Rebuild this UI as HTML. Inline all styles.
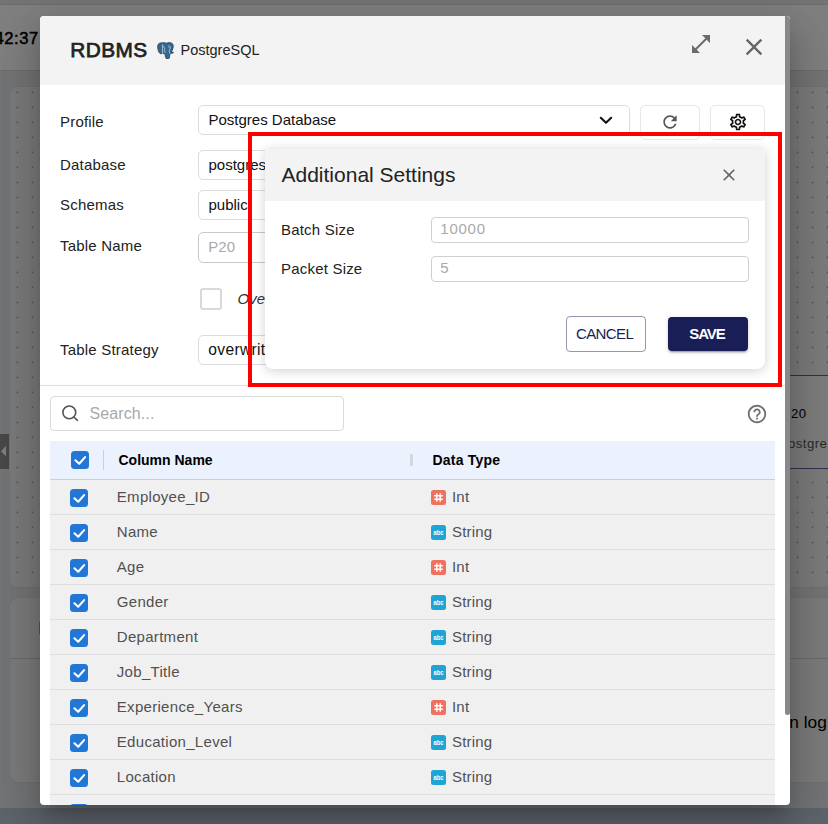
<!DOCTYPE html>
<html lang="en">
<head>
<meta charset="utf-8">
<title>RDBMS - PostgreSQL</title>
<style>
*{box-sizing:border-box;margin:0;padding:0}
html,body{width:828px;height:824px;overflow:hidden}
body{position:relative;background:#e4e8ec;font-family:"Liberation Sans",Arial,sans-serif;color:#222;font-size:15px}
.abs{position:absolute}
.t{position:absolute;white-space:nowrap;line-height:20px}
/* ---------- underlying app (dimmed by backdrop) ---------- */
#topbar{left:0;top:4px;width:828px;height:67px;background:#fff;border-top:1px solid #dadada;border-bottom:1px solid #d8d8d8}
#clock{right:789.2px;top:28.5px;font-size:16.6px;color:#000;letter-spacing:.55px;-webkit-text-stroke:.5px #000}
#card1{left:9px;top:85.5px;width:900px;height:502px;background:#f6f6f6;border:1px solid #e2e2e2;border-radius:9px;overflow:hidden}
#card2{left:9px;top:597px;width:900px;height:186px;background:#f6f6f6;border:1px solid #e2e2e2;border-radius:9px}
#card2 i{display:block;position:absolute;left:0;right:0;top:60px;height:1px;background:#d4d4d4}
#node{left:700px;top:375px;width:200px;height:94px;background:#fbfbfb;border-top:1px solid #60639a;border-bottom:1px solid #60639a}
#botbar{left:0;top:808px;width:828px;height:16px;background:#bcc8d8}
#backdrop{left:0;top:0;width:828px;height:824px;background:rgba(0,0,0,.5)}
/* ---------- dialog ---------- */
#modal{left:40px;top:16px;width:750px;height:788.5px;background:#fff;border-radius:4px;overflow:hidden;
 box-shadow:0 11px 15px -7px rgba(0,0,0,.2),0 24px 38px 3px rgba(0,0,0,.14),0 9px 46px 8px rgba(0,0,0,.12)}
#mhead{left:0;top:0;width:750px;height:69px;background:#f3f3f3}
#thumb{left:745px;top:0;width:5px;height:698.5px;background:#888;border-radius:0 3px 3px 3px}
.box{position:absolute;border:1px solid #dcdcdc;border-radius:5px;background:#fff}
.lbl{font-size:15px;color:#222;letter-spacing:.2px}
.val{font-size:15px;color:#111}
.ph{color:#a9a9a9}
/* grid */
#ghead{left:10px;top:425px;width:725px;height:39px;background:#ebf1fd;border-bottom:1px solid #c9cfdb}
.row{position:absolute;left:10px;width:725px;height:35px;background:#f0f0f0;border-bottom:1px solid #dedede}
.cb{position:absolute;width:18px;height:18px;border-radius:3.5px;background:#2277d6}
.cb svg{position:absolute;left:0;top:0}
.rt{position:absolute;left:66.800px;top:6.800px;line-height:20px;font-size:15px;color:#505050;white-space:nowrap;letter-spacing:.3px}
.dt{position:absolute;left:402px;top:6.800px;line-height:20px;font-size:15px;color:#505050;white-space:nowrap;letter-spacing:.2px}
.ic{position:absolute;left:381px;top:10px;width:15px;height:15px;border-radius:2.5px}
.ic.n{background:#f07160}
.ic.s{background:#1fa4d6}
.ic svg{position:absolute;left:0;top:0}
/* popup */
#pop{left:265px;top:148.5px;width:500px;height:220px;background:#fff;border-radius:1px 1px 8px 8px;overflow:hidden;
 box-shadow:0 1.500px 12px 0 rgba(0,0,0,.18)}
#phead{left:0;top:0;width:500px;height:52px;background:#f3f3f3}
</style>
</head>
<body>
<!-- underlying application -->
<div id="topbar" class="abs"></div>
<div id="clock" class="t">42:37</div>
<div id="card1" class="abs"><svg class="abs" style="left:0px;top:-1px" width="830" height="501"><defs><pattern id="dots" x="0" y="-1.200" width="15" height="15" patternUnits="userSpaceOnUse"><circle cx="7.5" cy="7.5" r=".85" fill="#989898"/></pattern></defs><rect width="830" height="501" fill="url(#dots)"/></svg></div>
<div id="card2" class="abs"><i></i></div>
<div id="node" class="abs"></div>
<div class="t" style="left:781.600px;top:403.500px;font-size:13.200px;color:#000;letter-spacing:.5px">P20</div>
<div class="t" style="left:778.700px;top:434.200px;font-size:13.200px;color:#555;letter-spacing:.45px">PostgreSQL</div>
<div class="t" style="left:789.300px;top:711.800px;font-size:17.300px;color:#000">n log</div>
<div class="abs" style="left:38.800px;top:622px;width:1.200px;height:12px;background:#f0a040"></div>
<div class="abs" style="left:0;top:434.2px;width:8.900px;height:34.500px;background:#909090"></div>
<svg class="abs" style="left:0;top:444px" width="9" height="14" viewBox="0 0 9 14"><path d="M.9 7.200 6 2.100V12.200z" fill="#fff"/></svg>
<div id="botbar" class="abs"></div>
<div id="backdrop" class="abs"></div>

<!-- dialog -->
<div id="modal" class="abs">
  <div id="mhead" class="abs"></div>
  <div class="t" style="left:30.300px;top:21.500px;font-size:20.800px;color:#222;line-height:24px;-webkit-text-stroke:.75px #222;letter-spacing:.4px">RDBMS</div>
  <svg class="abs" style="left:117px;top:25.500px" width="17.500" height="17.500" viewBox="0 0 17.500 17.500">
    <path d="M3.200 1C1.500 1.400.5 2.800.6 4.800c.1 2.400.9 5 1.900 6.200.8 1 2.200 1 3-.1.600.8 1.600 1.100 2.600.8l.2 2.600c.1 1.800 1 2.800 2.200 2.800 1.400 0 2.100-1 2.200-2.600l.2-3c1 .2 2.400 0 3.400-.7.400-.3.200-.7-.300-.6-.7.100-1.300 0-1.700-.300 1.400-2 2.400-5 1.800-7C15.600 1.400 14 .6 12.300.6c-1 0-1.900.2-2.700.6C8.900.900 8.100.7 7.100.7c-1.400 0-2.600.1-3.900.3z" fill="#336791" stroke="#27394b" stroke-width=".75" stroke-linejoin="round"/>
    <path d="M5.700 2.800c-.4 2.400-.2 5.800-.2 8.100M5.800 4.200c1.300.4 2.100 1.600 1.900 3.400-.1 1-.3 2 .4 3M11.700 3.800c1-.2 1.800.6 1.600 1.800-.2 1.400-1.200 2.800-1 4.200.1.800.4 1.400.6 1.700" fill="none" stroke="#e6eef6" stroke-width=".65" stroke-linecap="round"/>
    <circle cx="11.900" cy="5.400" r=".45" fill="#e6eef6"/>
  </svg>
  <div class="t" style="left:140.5px;top:24.400px;font-size:14.500px;color:#222">PostgreSQL</div>
  <svg class="abs" style="left:649px;top:16px" width="24" height="24" viewBox="0 0 24 24"><path fill="#6b6b6b" d="M21 11V3h-8l3.290 3.290-10 10L3 13v8h8l-3.290-3.290 10-10z"/></svg>
  <svg class="abs" style="left:700px;top:16.800px" width="28" height="28" viewBox="0 0 24 24"><path fill="#666" d="M19 6.410 17.590 5 12 10.590 6.410 5 5 6.410 10.590 12 5 17.590 6.410 19 12 13.410 17.590 19 19 17.590 13.410 12z"/></svg>

  <!-- form -->
  <div class="t lbl" style="left:20px;top:95.900px">Profile</div>
  <div class="t lbl" style="left:20px;top:139px">Database</div>
  <div class="t lbl" style="left:20px;top:178.600px">Schemas</div>
  <div class="t lbl" style="left:20px;top:220px">Table Name</div>
  <div class="t lbl" style="left:20px;top:324px">Table Strategy</div>

  <div class="box" style="left:158px;top:89px;width:432px;height:30px"></div>
  <div class="t val" style="left:168.5px;top:93.6px">Postgres Database</div>
  <svg class="abs" style="left:559px;top:100px" width="14" height="9" viewBox="0 0 14 9"><path d="M1.8 1.800 7 6.800 12.200 1.800" fill="none" stroke="#111" stroke-width="2.100" stroke-linecap="round" stroke-linejoin="round"/></svg>
  <div class="box" style="left:600.4px;top:89px;width:59.4px;height:34.5px;border-color:#e6e6e6"></div>
  <svg class="abs" style="left:620px;top:96px" width="20" height="20" viewBox="0 0 24 24"><path fill="#555" d="M17.650 6.350C16.200 4.900 14.210 4 12 4c-4.420 0-7.990 3.580-7.990 8s3.570 8 7.990 8c3.730 0 6.840-2.550 7.730-6h-2.080c-.82 2.330-3.040 4-5.650 4-3.310 0-6-2.690-6-6s2.690-6 6-6c1.660 0 3.140.69 4.220 1.780L13 11h7V4l-2.350 2.350z"/></svg>
  <div class="box" style="left:670.2px;top:89px;width:54.8px;height:34.5px;border-color:#e6e6e6"></div>
  <svg class="abs" style="left:687.7px;top:96px" width="20" height="20" viewBox="0 0 24 24"><path fill="#111" d="M19.430 12.980c.04-.32.070-.64.070-.98 0-.34-.03-.66-.07-.98l2.110-1.650c.19-.15.240-.42.120-.64l-2-3.460c-.09-.16-.26-.25-.44-.25-.06 0-.12.010-.17.030l-2.490 1c-.52-.4-1.080-.73-1.690-.98l-.38-2.650C14.460 2.180 14.250 2 14 2h-4c-.25 0-.46.180-.49.420l-.38 2.650c-.61.250-1.170.59-1.690.98l-2.490-1c-.06-.02-.12-.03-.18-.03-.17 0-.34.090-.43.250l-2 3.460c-.13.220-.07.490.12.640l2.110 1.650c-.04.320-.07.650-.07.980 0 .33.030.66.070.98l-2.110 1.650c-.19.150-.24.420-.12.640l2 3.460c.09.160.26.250.44.250.06 0 .12-.01.17-.03l2.490-1c.52.400 1.080.73 1.690.98l.38 2.650c.03.240.24.420.49.420h4c.25 0 .46-.18.490-.42l.38-2.650c.61-.25 1.170-.59 1.690-.98l2.490 1c.06.020.12.030.18.030.17 0 .34-.09.430-.25l2-3.460c.12-.22.070-.49-.12-.64l-2.110-1.650zm-1.980-1.710c.04.310.05.520.05.730 0 .21-.02.430-.05.730l-.14 1.130.89.700 1.080.84-.7 1.210-1.270-.51-1.040-.42-.9.680c-.43.320-.84.560-1.250.73l-1.060.43-.16 1.130-.2 1.350h-1.400l-.19-1.350-.16-1.130-1.060-.43c-.43-.18-.83-.41-1.230-.71l-.91-.7-1.060.43-1.270.51-.7-1.210 1.080-.84.890-.7-.14-1.130c-.03-.31-.05-.54-.05-.74s.02-.43.050-.73l.14-1.130-.89-.7-1.080-.84.700-1.210 1.270.51 1.040.42.900-.68c.43-.32.840-.56 1.250-.73l1.060-.43.160-1.130.200-1.350h1.390l.19 1.350.16 1.130 1.060.43c.43.180.83.410 1.230.710l.91.700 1.060-.43 1.270-.51.700 1.210-1.070.85-.89.700.14 1.130zM12 8c-2.210 0-4 1.790-4 4s1.790 4 4 4 4-1.790 4-4-1.790-4-4-4zm0 6c-1.100 0-2-.9-2-2s.9-2 2-2 2 .9 2 2-.9 2-2 2z"/></svg>

  <div class="box" style="left:158px;top:134px;width:432px;height:30px"></div>
  <div class="t val" style="left:168.5px;top:138.900px">postgres</div>
  <div class="box" style="left:158px;top:174px;width:432px;height:30px"></div>
  <div class="t val" style="left:168.5px;top:178.900px">public</div>
  <div class="box" style="left:158px;top:216px;width:432px;height:31px;border-color:#c9c9c9"></div>
  <div class="t val ph" style="left:168.300px;top:220.800px">P20</div>
  <div class="abs" style="left:160px;top:271.800px;width:22px;height:22px;border:2px solid #d9d9d9;border-radius:3px;background:#fff"></div>
  <div class="t" style="left:197.500px;top:272.500px;font-style:italic;color:#333">Overwrite</div>
  <div class="box" style="left:158px;top:319px;width:432px;height:30px"></div>
  <div class="t val" style="left:168.300px;top:323.500px;font-size:15.600px;letter-spacing:.32px">overwrite</div>

  <div class="abs" style="left:0;top:369px;width:750px;height:1px;background:#dedede"></div>

  <!-- search -->
  <div class="box" style="left:10.200px;top:380.200px;width:294px;height:35px;border-radius:4px;border-color:#dadada"></div>
  <svg class="abs" style="left:20px;top:388px" width="20" height="20" viewBox="0 0 20 20"><circle cx="9.300" cy="8.400" r="6.400" fill="none" stroke="#555" stroke-width="1.600"/><path d="M13.900 13 17.400 16.300" stroke="#555" stroke-width="1.600" stroke-linecap="round"/></svg>
  <div class="t ph" style="left:49.500px;top:387.800px;font-size:16px;letter-spacing:.1px">Search...</div>
  <svg class="abs" style="left:706.200px;top:387.300px" width="22" height="22" viewBox="0 0 24 24"><path fill="#707070" d="M11 18h2v-2h-2v2zm1-16C6.480 2 2 6.480 2 12s4.480 10 10 10 10-4.480 10-10S17.520 2 12 2zm0 18c-4.410 0-8-3.590-8-8s3.590-8 8-8 8 3.590 8 8-3.590 8-8 8zm0-14c-2.210 0-4 1.790-4 4h2c0-1.100.9-2 2-2s2 .9 2 2c0 2-3 1.750-3 5h2c0-2.250 3-2.500 3-5 0-2.210-1.790-4-4-4z"/></svg>

  <!-- grid -->
  <div id="ghead" class="abs">
    <div class="cb" style="left:21px;top:10px"><svg width="18" height="18" viewBox="0 0 18 18"><path d="M4.400 9.300 8.200 12.700 14.100 6.100" fill="none" stroke="#fff" stroke-width="2.100" stroke-linecap="round" stroke-linejoin="round"/></svg></div>
    <div class="abs" style="left:53px;top:9px;width:1px;height:20px;background:#cfcfcf"></div>
    <div class="t" style="left:68.500px;top:9.300px;font-size:14px;font-weight:bold;color:#000">Column Name</div>
    <div class="abs" style="left:360px;top:13.200px;width:2.500px;height:12px;background:#d3d7de"></div>
    <div class="t" style="left:382.500px;top:9.300px;font-size:14px;font-weight:bold;color:#000;letter-spacing:.2px">Data Type</div>
  </div>
  <div class="row" style="top:464.0px"><div class="cb" style="left:20px;top:9px"><svg width="18" height="18" viewBox="0 0 18 18"><path d="M4.400 9.300 8.200 12.700 14.100 6.100" fill="none" stroke="#fff" stroke-width="2.100" stroke-linecap="round" stroke-linejoin="round"/></svg></div><span class="rt">Employee_ID</span><span class="ic n"><svg width="15" height="15" viewBox="0 0 15 15"><path d="M5.800 3.200v8.600M9.200 3.200v8.600M3.200 5.800h8.600M3.200 9.200h8.600" stroke="#fff" stroke-width="1.400" fill="none"/></svg></span><span class="dt">Int</span></div>
  <div class="row" style="top:499.0px"><div class="cb" style="left:20px;top:9px"><svg width="18" height="18" viewBox="0 0 18 18"><path d="M4.400 9.300 8.200 12.700 14.100 6.100" fill="none" stroke="#fff" stroke-width="2.100" stroke-linecap="round" stroke-linejoin="round"/></svg></div><span class="rt">Name</span><span class="ic s"><svg width="15" height="15" viewBox="0 0 15 15"><text x="7.500" y="10.300" font-family="Liberation Sans,Arial,sans-serif" font-size="7" font-weight="bold" fill="#fff" text-anchor="middle" textLength="10" lengthAdjust="spacingAndGlyphs">abc</text></svg></span><span class="dt">String</span></div>
  <div class="row" style="top:534.0px"><div class="cb" style="left:20px;top:9px"><svg width="18" height="18" viewBox="0 0 18 18"><path d="M4.400 9.300 8.200 12.700 14.100 6.100" fill="none" stroke="#fff" stroke-width="2.100" stroke-linecap="round" stroke-linejoin="round"/></svg></div><span class="rt">Age</span><span class="ic n"><svg width="15" height="15" viewBox="0 0 15 15"><path d="M5.800 3.200v8.600M9.200 3.200v8.600M3.200 5.800h8.600M3.200 9.200h8.600" stroke="#fff" stroke-width="1.400" fill="none"/></svg></span><span class="dt">Int</span></div>
  <div class="row" style="top:569.0px"><div class="cb" style="left:20px;top:9px"><svg width="18" height="18" viewBox="0 0 18 18"><path d="M4.400 9.300 8.200 12.700 14.100 6.100" fill="none" stroke="#fff" stroke-width="2.100" stroke-linecap="round" stroke-linejoin="round"/></svg></div><span class="rt">Gender</span><span class="ic s"><svg width="15" height="15" viewBox="0 0 15 15"><text x="7.500" y="10.300" font-family="Liberation Sans,Arial,sans-serif" font-size="7" font-weight="bold" fill="#fff" text-anchor="middle" textLength="10" lengthAdjust="spacingAndGlyphs">abc</text></svg></span><span class="dt">String</span></div>
  <div class="row" style="top:604.0px"><div class="cb" style="left:20px;top:9px"><svg width="18" height="18" viewBox="0 0 18 18"><path d="M4.400 9.300 8.200 12.700 14.100 6.100" fill="none" stroke="#fff" stroke-width="2.100" stroke-linecap="round" stroke-linejoin="round"/></svg></div><span class="rt">Department</span><span class="ic s"><svg width="15" height="15" viewBox="0 0 15 15"><text x="7.500" y="10.300" font-family="Liberation Sans,Arial,sans-serif" font-size="7" font-weight="bold" fill="#fff" text-anchor="middle" textLength="10" lengthAdjust="spacingAndGlyphs">abc</text></svg></span><span class="dt">String</span></div>
  <div class="row" style="top:639.0px"><div class="cb" style="left:20px;top:9px"><svg width="18" height="18" viewBox="0 0 18 18"><path d="M4.400 9.300 8.200 12.700 14.100 6.100" fill="none" stroke="#fff" stroke-width="2.100" stroke-linecap="round" stroke-linejoin="round"/></svg></div><span class="rt">Job_Title</span><span class="ic s"><svg width="15" height="15" viewBox="0 0 15 15"><text x="7.500" y="10.300" font-family="Liberation Sans,Arial,sans-serif" font-size="7" font-weight="bold" fill="#fff" text-anchor="middle" textLength="10" lengthAdjust="spacingAndGlyphs">abc</text></svg></span><span class="dt">String</span></div>
  <div class="row" style="top:674.0px"><div class="cb" style="left:20px;top:9px"><svg width="18" height="18" viewBox="0 0 18 18"><path d="M4.400 9.300 8.200 12.700 14.100 6.100" fill="none" stroke="#fff" stroke-width="2.100" stroke-linecap="round" stroke-linejoin="round"/></svg></div><span class="rt">Experience_Years</span><span class="ic n"><svg width="15" height="15" viewBox="0 0 15 15"><path d="M5.800 3.200v8.600M9.200 3.200v8.600M3.200 5.800h8.600M3.200 9.200h8.600" stroke="#fff" stroke-width="1.400" fill="none"/></svg></span><span class="dt">Int</span></div>
  <div class="row" style="top:709.0px"><div class="cb" style="left:20px;top:9px"><svg width="18" height="18" viewBox="0 0 18 18"><path d="M4.400 9.300 8.200 12.700 14.100 6.100" fill="none" stroke="#fff" stroke-width="2.100" stroke-linecap="round" stroke-linejoin="round"/></svg></div><span class="rt">Education_Level</span><span class="ic s"><svg width="15" height="15" viewBox="0 0 15 15"><text x="7.500" y="10.300" font-family="Liberation Sans,Arial,sans-serif" font-size="7" font-weight="bold" fill="#fff" text-anchor="middle" textLength="10" lengthAdjust="spacingAndGlyphs">abc</text></svg></span><span class="dt">String</span></div>
  <div class="row" style="top:744.0px"><div class="cb" style="left:20px;top:9px"><svg width="18" height="18" viewBox="0 0 18 18"><path d="M4.400 9.300 8.200 12.700 14.100 6.100" fill="none" stroke="#fff" stroke-width="2.100" stroke-linecap="round" stroke-linejoin="round"/></svg></div><span class="rt">Location</span><span class="ic s"><svg width="15" height="15" viewBox="0 0 15 15"><text x="7.500" y="10.300" font-family="Liberation Sans,Arial,sans-serif" font-size="7" font-weight="bold" fill="#fff" text-anchor="middle" textLength="10" lengthAdjust="spacingAndGlyphs">abc</text></svg></span><span class="dt">String</span></div>
  <div class="row" style="top:779.0px"><div class="cb" style="left:20px;top:9px"><svg width="18" height="18" viewBox="0 0 18 18"><path d="M4.400 9.300 8.200 12.700 14.100 6.100" fill="none" stroke="#fff" stroke-width="2.100" stroke-linecap="round" stroke-linejoin="round"/></svg></div><span class="rt">Salary</span><span class="ic n"><svg width="15" height="15" viewBox="0 0 15 15"><path d="M5.800 3.200v8.600M9.200 3.200v8.600M3.200 5.800h8.600M3.200 9.200h8.600" stroke="#fff" stroke-width="1.400" fill="none"/></svg></span><span class="dt">Int</span></div>

  <!-- additional settings popover -->
  <div id="pop" class="abs" style="left:225px;top:132.500px">
    <div id="phead" class="abs"></div>
    <div class="t" style="left:16.500px;top:14.500px;font-size:21px;line-height:24px;color:#222">Additional Settings</div>
    <svg class="abs" style="left:454px;top:16.500px" width="20" height="20" viewBox="0 0 24 24"><path fill="#666" d="M19 6.410 17.590 5 12 10.590 6.410 5 5 6.410 10.590 12 5 17.590 6.410 19 12 13.410 17.590 19 19 17.590 13.410 12z"/></svg>
    <div class="t lbl" style="left:16px;top:71.100px">Batch Size</div>
    <div class="box" style="left:166.200px;top:68.500px;width:317.500px;height:25.500px;border-radius:4px;border-color:#cfcfcf"></div>
    <div class="t ph" style="left:175.300px;top:70.600px;letter-spacing:.75px">10000</div>
    <div class="t lbl" style="left:16px;top:110.700px">Packet Size</div>
    <div class="box" style="left:166.200px;top:107.600px;width:317.500px;height:25.500px;border-radius:4px;border-color:#cfcfcf"></div>
    <div class="t ph" style="left:175.300px;top:109.800px">5</div>
    <div class="abs" style="left:301px;top:167.500px;width:79.600px;height:35.500px;border:1px solid #9496b2;border-radius:4px;background:#fff"></div>
    <div class="t" style="left:311px;top:175.300px;color:#1a1e56;letter-spacing:-.62px">CANCEL</div>
    <div class="abs" style="left:403.200px;top:168.800px;width:79.800px;height:33.400px;border-radius:4px;background:#1a1e56;box-shadow:0 3px 1px -2px rgba(0,0,0,.2),0 2px 2px 0 rgba(0,0,0,.14),0 1px 5px 0 rgba(0,0,0,.12)"></div>
    <div class="t" style="left:424.200px;top:175.300px;color:#fff;font-weight:bold;letter-spacing:-1.05px">SAVE</div>
  </div>
  <div id="thumb" class="abs"></div>
</div>

<!-- highlight annotation -->
<div class="abs" style="left:248px;top:132px;width:534px;height:255px;border:4px solid #ff0000"></div>
</body>
</html>
